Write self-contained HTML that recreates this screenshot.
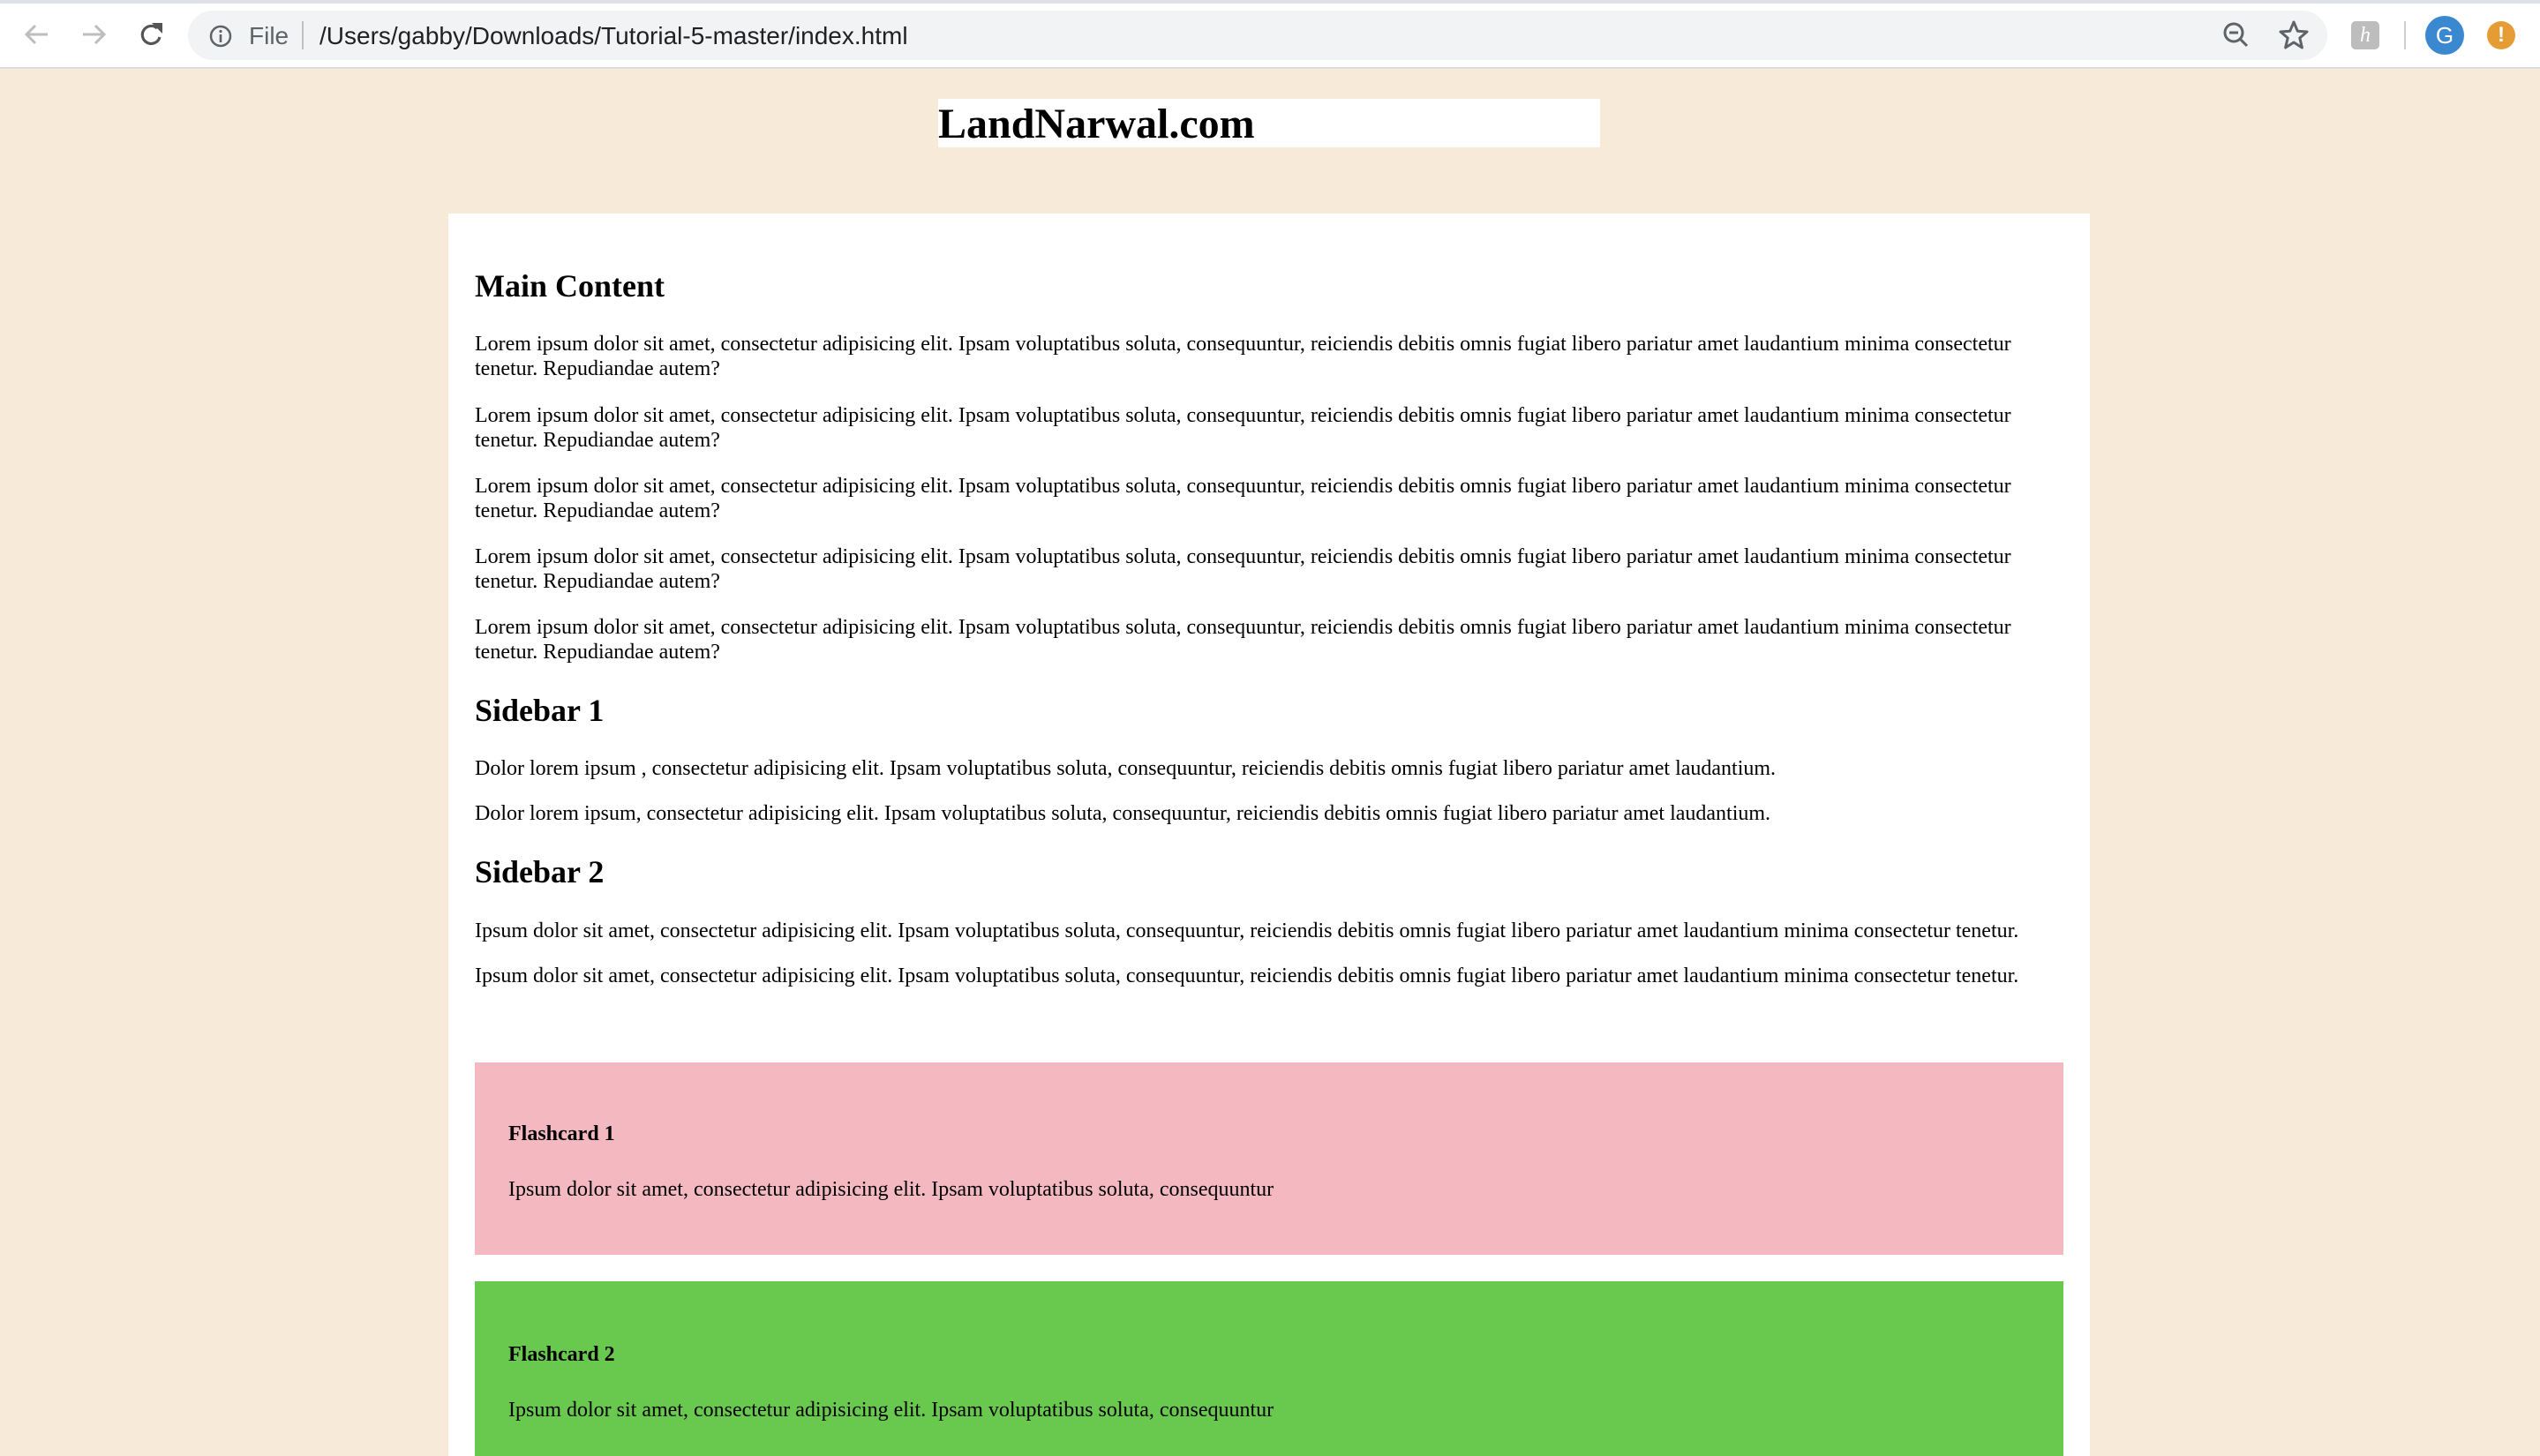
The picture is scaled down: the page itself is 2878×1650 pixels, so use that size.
<!DOCTYPE html>
<html><head><meta charset="utf-8"><style>
*{margin:0;padding:0;box-sizing:border-box}
body{width:2878px;height:1650px;overflow:hidden;background:#f8ead9;position:relative;font-family:"Liberation Serif",serif;color:#000}
.a{position:absolute;white-space:nowrap}
.p{font-size:24px;line-height:27.5px}
.h{font-size:36px;font-weight:bold;line-height:40px}
.ui{font-family:"Liberation Sans",sans-serif}
.f{font-size:24px;font-weight:bold;line-height:28px}
</style></head><body>
<div class="a" style="left:0;top:0;width:2878px;height:78px;background:#fff;border-bottom:2px solid #dadce0"></div>
<div class="a" style="left:0;top:0;width:2878px;height:4px;background:#dee1e6"></div>
<svg class="a" style="left:20px;top:20px" width="180" height="40" viewBox="0 0 180 40">
<path d="M34 19H10M20 9L10 19L20 29" stroke="#bdbdbd" stroke-width="3" fill="none"/>
<path d="M74 19H98M88 9L98 19L88 29" stroke="#bdbdbd" stroke-width="3" fill="none"/>
<path d="M158 12A10 10 0 1 0 161 22" stroke="#555" stroke-width="3.2" fill="none"/><path d="M152 6L164 6L164 18Z" fill="#555"/>
</svg>
<div class="a" style="left:213px;top:12px;width:2424px;height:56px;border-radius:28px;background:#f1f3f4"></div>
<svg class="a" style="left:236px;top:27px" width="28" height="28" viewBox="0 0 28 28"><circle cx="14" cy="14" r="11" stroke="#5f6368" stroke-width="2.5" fill="none"/><rect x="12.7" y="12" width="2.6" height="9" fill="#5f6368"/><circle cx="14" cy="8.5" r="1.6" fill="#5f6368"/></svg>
<div class="a ui" style="left:282px;top:24px;font-size:28px;line-height:34px;color:#5f6368">File</div>
<div class="a" style="left:342px;top:24px;width:2px;height:32px;background:#bdc1c6"></div>
<div class="a ui" style="left:362px;top:24px;font-size:28px;line-height:34px;color:#202124">/Users/gabby/Downloads/Tutorial-5-master/index.html</div>
<svg class="a" style="left:2516px;top:22px" width="36" height="36" viewBox="0 0 36 36"><circle cx="15" cy="15" r="10" stroke="#5f6368" stroke-width="3" fill="none"/><path d="M10 15H20M22 22L30 30" stroke="#5f6368" stroke-width="3"/></svg>
<svg class="a" style="left:2580px;top:21px" width="38" height="38" viewBox="0 0 38 38"><path d="M19 4L23.3 14.2L34 15L25.8 22L28.4 33L19 27L9.6 33L12.2 22L4 15L14.7 14.2Z" stroke="#5f6368" stroke-width="3" fill="none" stroke-linejoin="round"/></svg>
<div class="a" style="left:2664px;top:24px;width:32px;height:32px;border-radius:5px;background:#bdbdbd;color:#fff;font-size:24px;line-height:32px;text-align:center;font-style:italic">h</div>
<div class="a" style="left:2724px;top:24px;width:2px;height:32px;background:#d0d0d0"></div>
<div class="a ui" style="left:2748px;top:18px;width:44px;height:44px;border-radius:50%;background:#3a88d0;color:#fff;font-size:26px;line-height:44px;text-align:center">G</div>
<div class="a ui" style="left:2818px;top:24px;width:32px;height:32px;border-radius:50%;background:#e69c35;color:#fff;font-size:24px;font-weight:bold;line-height:32px;text-align:center">!</div>

<div class="a" style="left:1063px;top:112px;width:750px;height:55px;background:#fff"></div>
<div class="a" style="left:1063px;top:113px;font-size:48px;font-weight:bold;line-height:55px">LandNarwal.com</div>

<div class="a" style="left:508px;top:242px;width:1860px;height:1408px;background:#fff"></div>
<div class="a h" style="left:538px;top:304px">Main Content</div>
<div class="a p" style="left:538px;top:377px">Lorem ipsum dolor sit amet, consectetur adipisicing elit. Ipsam voluptatibus soluta, consequuntur, reiciendis debitis omnis fugiat libero pariatur amet laudantium minima consectetur<br>tenetur. Repudiandae autem?</div>
<div class="a p" style="left:538px;top:458px">Lorem ipsum dolor sit amet, consectetur adipisicing elit. Ipsam voluptatibus soluta, consequuntur, reiciendis debitis omnis fugiat libero pariatur amet laudantium minima consectetur<br>tenetur. Repudiandae autem?</div>
<div class="a p" style="left:538px;top:538px">Lorem ipsum dolor sit amet, consectetur adipisicing elit. Ipsam voluptatibus soluta, consequuntur, reiciendis debitis omnis fugiat libero pariatur amet laudantium minima consectetur<br>tenetur. Repudiandae autem?</div>
<div class="a p" style="left:538px;top:618px">Lorem ipsum dolor sit amet, consectetur adipisicing elit. Ipsam voluptatibus soluta, consequuntur, reiciendis debitis omnis fugiat libero pariatur amet laudantium minima consectetur<br>tenetur. Repudiandae autem?</div>
<div class="a p" style="left:538px;top:698px">Lorem ipsum dolor sit amet, consectetur adipisicing elit. Ipsam voluptatibus soluta, consequuntur, reiciendis debitis omnis fugiat libero pariatur amet laudantium minima consectetur<br>tenetur. Repudiandae autem?</div>
<div class="a h" style="left:538px;top:785px">Sidebar 1</div>
<div class="a p" style="left:538px;top:858px">Dolor lorem ipsum , consectetur adipisicing elit. Ipsam voluptatibus soluta, consequuntur, reiciendis debitis omnis fugiat libero pariatur amet laudantium.</div>
<div class="a p" style="left:538px;top:909px">Dolor lorem ipsum, consectetur adipisicing elit. Ipsam voluptatibus soluta, consequuntur, reiciendis debitis omnis fugiat libero pariatur amet laudantium.</div>
<div class="a h" style="left:538px;top:968px">Sidebar 2</div>
<div class="a p" style="left:538px;top:1042px">Ipsum dolor sit amet, consectetur adipisicing elit. Ipsam voluptatibus soluta, consequuntur, reiciendis debitis omnis fugiat libero pariatur amet laudantium minima consectetur tenetur.</div>
<div class="a p" style="left:538px;top:1093px">Ipsum dolor sit amet, consectetur adipisicing elit. Ipsam voluptatibus soluta, consequuntur, reiciendis debitis omnis fugiat libero pariatur amet laudantium minima consectetur tenetur.</div>

<div class="a" style="left:538px;top:1204px;width:1800px;height:218px;background:#f4b8c1"></div>
<div class="a f" style="left:576px;top:1271px">Flashcard 1</div>
<div class="a p" style="left:576px;top:1335px">Ipsum dolor sit amet, consectetur adipisicing elit. Ipsam voluptatibus soluta, consequuntur</div>
<div class="a" style="left:538px;top:1452px;width:1800px;height:198px;background:#68c94e"></div>
<div class="a f" style="left:576px;top:1521px">Flashcard 2</div>
<div class="a p" style="left:576px;top:1585px">Ipsum dolor sit amet, consectetur adipisicing elit. Ipsam voluptatibus soluta, consequuntur</div>
</body></html>
